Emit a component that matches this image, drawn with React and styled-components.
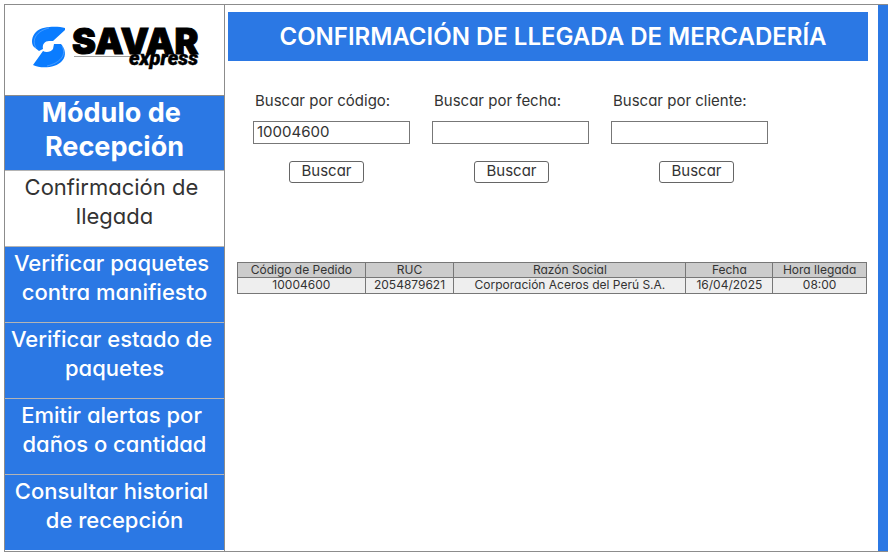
import React, { useState } from 'react';
import styled, { createGlobalStyle } from 'styled-components';

const BLUE = '#2b78e4';
const INK = '#333333';
const LINE = '#8c8c8c';

const GlobalStyle = createGlobalStyle`
  *, *::before, *::after { box-sizing: border-box; }
  body {
    margin: 0;
    background: #ffffff;
    color: ${INK};
    font-family: Inter, "Liberation Sans", sans-serif;
    font-feature-settings: "cv11" 1;
  }
  button, input { font: inherit; color: inherit; font-feature-settings: inherit; }
`;

const Page = styled.div`
  padding: 4px 6px 6px 4px;
`;

const Frame = styled.div`
  display: flex;
  align-items: stretch;
  border: 1px solid ${LINE};
  border-width: 1px 0;
`;

const Sidebar = styled.aside`
  flex: 0 0 221px;
  padding-bottom: 1px;
  border: 1px solid ${LINE};
  border-width: 0 1px;
`;

const LogoBox = styled.div`
  height: 91px;
  padding: 7px 15px 0 26px;
  border-bottom: 1px solid ${LINE};
`;

const ModuleTitle = styled.h2`
  margin: 0;
  height: 74px;
  background: ${BLUE};
  color: #ffffff;
  font-size: 27px;
  font-weight: 700;
  line-height: 34px;
  text-align: center;
  white-space: break-spaces;
`;

const NavLink = styled.a`
  display: block;
  min-height: 76px;
  padding: 2px 0 15px;
  border-top: 1px solid #b4b4b4;
  background: ${({ $active }) => ($active ? '#ffffff' : BLUE)};
  color: ${({ $active }) => ($active ? INK : '#ffffff')};
  font-size: 22px;
  font-weight: ${({ $active }) => ($active ? 400 : 500)};
  line-height: 29px;
  text-align: center;
  text-decoration: none;
  white-space: break-spaces;
`;

const Main = styled.main`
  flex: 1;
  min-width: 0;
  padding: 7px 10px 0 3px;
`;

const PageTitle = styled.h1`
  margin: 0;
  padding: 10px 0 9px 10px;
  background: ${BLUE};
  color: #ffffff;
  font-size: 24px;
  font-weight: 600;
  line-height: 30px;
  text-align: center;
`;

const Search = styled.section`
  padding: 30px 0 0 25px;
`;

const Fields = styled.div`
  display: flex;
  gap: 22px;
`;

const Field = styled.form`
  display: flex;
  flex-direction: column;
  gap: 10px;
  width: 157px;
`;

const Label = styled.label`
  padding-left: 2px;
  font-size: 15px;
  line-height: 20px;
  white-space: nowrap;
`;

const TextBox = styled.input`
  width: 100%;
  height: 23px;
  padding: 0 3px 3px;
  border: 1px solid #777777;
  border-radius: 0;
  background: #ffffff;
  font-size: 15px;
  outline: none;
`;

const Actions = styled.div`
  display: flex;
  gap: 110px;
  padding: 17px 0 0 36px;
`;

const SearchButton = styled.button`
  width: 75px;
  height: 22px;
  padding: 0 0 2px;
  border: 1px solid #666666;
  border-radius: 3px;
  background: #ffffff;
  font-size: 15px;
  line-height: 18px;
`;

const Results = styled.div`
  padding: 79px 1px 0 9px;
`;

const Table = styled.table`
  width: 100%;
  table-layout: fixed;
  border-collapse: collapse;
  font-size: 12px;
  line-height: 14px;
  text-align: center;
`;

const Th = styled.th`
  width: ${({ $width }) => $width};
  padding: 0;
  border: 1px solid #777777;
  background: #cccccc;
  font-weight: 400;
  white-space: nowrap;
`;

const Td = styled.td`
  padding: 0 0 1px;
  border: 1px solid #777777;
  background: #eeeeee;
  white-space: nowrap;
`;

const RightBar = styled.div`
  flex: 0 0 10px;
  background: ${BLUE};
`;

const LogoArt = styled.svg`
  display: block;
  width: 100%;
  height: auto;
`;

function Logo() {
  return (
    <LogoArt viewBox="0 -10 178 70" role="img" aria-label="SAVAR express">
      <g fill="#0a7cff">
        <path d="M34 6 C27 4 12 4 6 9 C0 14 0 22 3 25 L8 29 L12 27 C11 22 14 19 18 19 L22 19 L34 8 Z" />
        <path d="M2 43 L12 29 C15 31 20 30 22 27 L23 22 L30 22 C34 26 36 34 31 39 C25 46 10 47 2 43 Z" />
      </g>
      <g fill="none" stroke="#ffffff" strokeWidth="0.5" opacity="0.5">
        <path d="M5 26 C0 17 6 9 18 6" />
        <path d="M31 24 C36 33 29 41 16 44" />
      </g>
      <path d="M43 34.5 H100" stroke="#777777" strokeWidth="0.7" />
      <text x="41" y="32" fill="#000000" stroke="#000000" strokeWidth="1" fontFamily="Inter, sans-serif" fontSize="36" fontWeight="900">SAVAR</text>
      <text x="98" y="43" fill="#000000" stroke="#000000" strokeWidth="0.4" fontFamily="Roboto, sans-serif" fontSize="20" fontWeight="900" fontStyle="italic">express</text>
    </LogoArt>
  );
}

const NAV = [
  { id: 'confirmacion', text: 'Confirmación de \nllegada' },
  { id: 'manifiesto', text: 'Verificar paquetes \ncontra manifiesto' },
  { id: 'estado', text: 'Verificar estado de \npaquetes' },
  { id: 'alertas', text: 'Emitir alertas por \ndaños o cantidad' },
  { id: 'historial', text: 'Consultar historial \nde recepción' },
];

const SEARCHES = [
  { id: 'codigo', label: 'Buscar por código:', initial: '10004600' },
  { id: 'fecha', label: 'Buscar por fecha:', initial: '' },
  { id: 'cliente', label: 'Buscar por cliente:', initial: '' },
];

const COLUMNS = [
  { title: 'Código de Pedido', width: '20.3%' },
  { title: 'RUC', width: '14.1%' },
  { title: 'Razón Social', width: '36.9%' },
  { title: 'Fecha', width: '13.8%' },
  { title: 'Hora llegada', width: '14.9%' },
];

const ROWS = [
  ['10004600', '2054879621', 'Corporación Aceros del Perú S.A.', '16/04/2025', '08:00'],
];

function SearchField({ id, label, initial }) {
  const [value, setValue] = useState(initial);
  return (
    <Field id={`form-${id}`} onSubmit={(e) => e.preventDefault()}>
      <Label htmlFor={id}>{label}</Label>
      <TextBox id={id} type="text" value={value} onChange={(e) => setValue(e.target.value)} />
    </Field>
  );
}

export default function App() {
  return (
    <Page>
      <GlobalStyle />
      <Frame>
        <Sidebar>
          <LogoBox><Logo /></LogoBox>
          <ModuleTitle>{'Módulo de \nRecepción'}</ModuleTitle>
          <nav>
            {NAV.map((item, i) => (
              <NavLink key={item.id} href={`#${item.id}`} $active={i === 0}>{item.text}</NavLink>
            ))}
          </nav>
        </Sidebar>
        <Main>
          <PageTitle>CONFIRMACIÓN DE LLEGADA DE MERCADERÍA</PageTitle>
          <Search>
            <Fields>
              {SEARCHES.map((s) => <SearchField key={s.id} {...s} />)}
            </Fields>
            <Actions>
              {SEARCHES.map((s) => (
                <SearchButton key={s.id} type="submit" form={`form-${s.id}`}>Buscar</SearchButton>
              ))}
            </Actions>
          </Search>
          <Results>
            <Table>
              <thead>
                <tr>{COLUMNS.map((c) => <Th key={c.title} $width={c.width} scope="col">{c.title}</Th>)}</tr>
              </thead>
              <tbody>
                {ROWS.map((row) => (
                  <tr key={row[0]}>{row.map((cell) => <Td key={cell}>{cell}</Td>)}</tr>
                ))}
              </tbody>
            </Table>
          </Results>
        </Main>
        <RightBar />
      </Frame>
    </Page>
  );
}
